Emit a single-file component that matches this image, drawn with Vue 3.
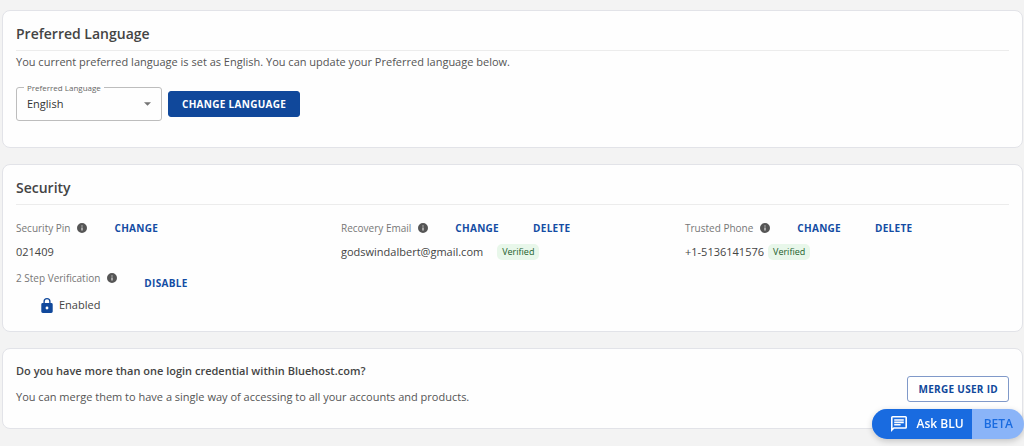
<script setup>
import { ref } from 'vue'

const language = ref('English')

const columns = [
  [
    { label: 'Security Pin', value: '021409', actions: ['CHANGE'] },
    { label: '2 Step Verification', value: 'Enabled', actions: ['DISABLE'], locked: true },
  ],
  [
    {
      label: 'Recovery Email',
      value: 'godswindalbert@gmail.com',
      actions: ['CHANGE', 'DELETE'],
      verified: true,
      spaced: true,
    },
  ],
  [
    { label: 'Trusted Phone', value: '+1-5136141576', actions: ['CHANGE', 'DELETE'], verified: true },
  ],
]
</script>

<template>
  <main class="page">
    <section class="card language">
      <h2 class="title">Preferred Language</h2>
      <p class="text">You current preferred language is set as English. You can update your Preferred language below.</p>
      <form class="form" @submit.prevent>
        <div class="field">
          <label class="field-label" for="language">Preferred Language</label>
          <select id="language" v-model="language" class="select">
            <option>English</option>
          </select>
          <svg class="caret" viewBox="0 0 8 4" aria-hidden="true"><path d="M0 0h8L4 4z" /></svg>
        </div>
        <button class="button primary" type="submit">CHANGE LANGUAGE</button>
      </form>
    </section>

    <section class="card security">
      <h2 class="title">Security</h2>
      <div class="columns">
        <div v-for="(items, i) in columns" :key="i" class="column">
          <div v-for="item in items" :key="item.label" class="item" :class="{ locked: item.locked }">
            <div class="item-head">
              <span class="item-label">{{ item.label }}</span>
              <svg class="info" viewBox="2 2 20 20" aria-hidden="true">
                <path d="M12 2a10 10 0 1 0 0 20 10 10 0 0 0 0-20zm1 15h-2v-6h2v6zm0-8h-2V7h2v2z" />
              </svg>
              <div class="actions">
                <button v-for="action in item.actions" :key="action" class="link" type="button">{{ action }}</button>
              </div>
            </div>
            <div class="item-value" :class="{ spaced: item.spaced }">
              <svg v-if="item.locked" class="lock" viewBox="4 1 16 21" aria-hidden="true">
                <path d="M18 8h-1V6A5 5 0 0 0 7 6v2H6a2 2 0 0 0-2 2v10c0 1.100.9 2 2 2h12a2 2 0 0 0 2-2V10a2 2 0 0 0-2-2zm-6 9a2 2 0 1 1 0-4 2 2 0 0 1 0 4zm3.100-9H8.900V6a3.100 3.100 0 0 1 6.200 0v2z" />
              </svg>
              <span>{{ item.value }}</span>
              <span v-if="item.verified" class="badge">Verified</span>
            </div>
          </div>
        </div>
      </div>
    </section>

    <section class="card merge">
      <div>
        <h3 class="question">Do you have more than one login credential within Bluehost.com?</h3>
        <p class="text">You can merge them to have a single way of accessing to all your accounts and products.</p>
      </div>
      <button class="button outlined" type="button">MERGE USER ID</button>
    </section>

    <button class="chat" type="button">
      <span class="chat-main">
        <svg class="chat-icon" viewBox="2 2 20 20" aria-hidden="true">
          <path d="M4 2a2 2 0 0 0-2 2v18l4-4h14a2 2 0 0 0 2-2V4a2 2 0 0 0-2-2H4zm0 2h16v12H5.200L4 17.200V4zm2 8h8v2H6v-2zm0-3h12v2H6V9zm0-3h12v2H6V6z" />
        </svg>
        Ask BLU
      </span>
      <span class="chat-beta">BETA</span>
    </button>
  </main>
</template>

<style>
body {
  margin: 0;
  background: #f3f3f3;
}
</style>

<style scoped>
.page {
  display: flex;
  flex-direction: column;
  gap: 16px;
  padding: 10px 1px 17px 2px;
  color: #444;
  font-family: "Open Sans", "Noto Sans", sans-serif;
  font-size: 11px;
  line-height: 16px;
}
.card {
  padding: 13px;
  background: #fefefe;
  border: 1px solid #e2e3e8;
  border-radius: 8px;
}
.title {
  margin: 0;
  padding-bottom: 6px;
  border-bottom: 1px solid #ececec;
  font-size: 14px;
  font-weight: 600;
  line-height: 20px;
}
.text {
  margin: 0;
  color: #555;
}
.language {
  padding-bottom: 26px;
}
.language .text {
  margin-top: 3px;
}
.form {
  display: flex;
  align-items: center;
  gap: 6px;
  margin-top: 17px;
}
.field {
  position: relative;
  display: flex;
  width: 146px;
}
.field-label {
  position: absolute;
  top: -5px;
  left: 8px;
  padding: 0 3px;
  background: #fefefe;
  color: #666;
  font-size: 8px;
  font-weight: 500;
  line-height: 12px;
}
.select {
  width: 100%;
  height: 34px;
  padding: 0 24px 1px 10px;
  appearance: none;
  background: transparent;
  border: 1px solid #bdbdbd;
  border-radius: 3px;
  color: #333;
  font: 500 11px "Open Sans", "Noto Sans", sans-serif;
}
.caret {
  position: absolute;
  top: 15px;
  right: 11px;
  width: 7px;
  height: 4px;
  fill: #757575;
  pointer-events: none;
}
.button {
  box-sizing: border-box;
  height: 26px;
  border: 1px solid #10489b;
  border-radius: 3px;
  font: 700 10px "Open Sans", "Noto Sans", sans-serif;
  letter-spacing: 0.03em;
  white-space: nowrap;
}
.primary {
  padding: 0 13px;
  background: #10489b;
  color: #fff;
}
.outlined {
  padding: 0 10px;
  background: #fff;
  border-color: #8099c9;
  color: #10489b;
}
.columns {
  display: grid;
  grid-template-columns: 325fr 344fr 324fr;
  margin-top: 13px;
}
.column {
  display: flex;
  flex-direction: column;
  gap: 6px;
}
.item {
  display: flex;
  flex-direction: column;
  gap: 4px;
}
.item-head,
.item-value {
  display: flex;
  align-items: center;
  min-height: 20px;
}
.item-label {
  color: #777;
  font-size: 10px;
  line-height: 20px;
}
.info {
  width: 10px;
  height: 10px;
  margin-left: 7px;
  fill: #555;
}
.actions {
  display: flex;
  gap: 34px;
  margin-left: 27px;
}
.link {
  padding: 0;
  background: none;
  border: 0;
  color: #134ca3;
  font: 700 10px/20px "Open Sans", "Noto Sans", sans-serif;
  letter-spacing: 0.03em;
}
.item-value {
  gap: 4px;
  color: #444;
  font-weight: 500;
}
.spaced {
  gap: 14px;
}
.badge {
  padding: 0 5px;
  background: #e8f7ea;
  border-radius: 5px;
  color: #1b5e2b;
  font-size: 9px;
  font-weight: 500;
}
.locked {
  gap: 2px;
}
.locked .item-head {
  align-items: flex-start;
}
.locked .info {
  margin-top: 5px;
}
.locked .actions {
  margin-top: 5px;
}
.locked .item-value {
  gap: 6px;
  padding-left: 25px;
}
.lock {
  width: 12px;
  height: 15px;
  fill: #10489b;
}
.security {
  padding-bottom: 16px;
}
.merge {
  display: flex;
  align-items: center;
  justify-content: space-between;
  padding: 14px 13px 23px;
}
.question {
  margin: 0 0 10px;
  font-size: 11px;
  font-weight: 600;
  line-height: 16px;
}
.merge .outlined {
  margin-top: 10px;
}
.chat {
  position: fixed;
  right: 0;
  bottom: 7px;
  display: flex;
  height: 30px;
  padding: 0;
  overflow: hidden;
  background: #8ab4f8;
  border: 0;
  border-radius: 15px;
  box-shadow: 0 2px 6px rgba(0, 0, 0, 0.2);
  font: 600 12px/30px "Open Sans", "Noto Sans", sans-serif;
}
.chat-main {
  display: flex;
  align-items: center;
  gap: 10px;
  padding: 0 8px 0 19px;
  background: #196be0;
  color: #fff;
}
.chat-icon {
  width: 16px;
  height: 16px;
  fill: #fff;
}
.chat-beta {
  padding: 0 11px 0 12px;
  color: #196be0;
}
</style>
